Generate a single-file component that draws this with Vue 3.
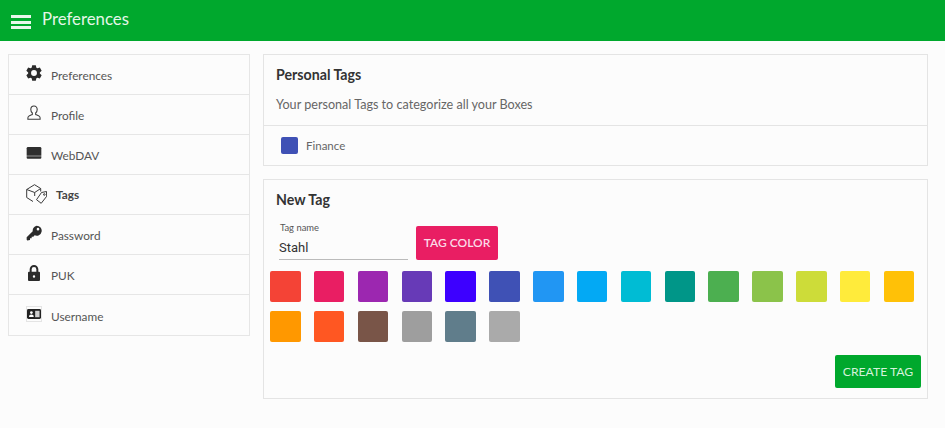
<script setup>
const nav = [
  { label: 'Preferences', icon: 'gear' },
  { label: 'Profile', icon: 'user' },
  { label: 'WebDAV', icon: 'drive' },
  { label: 'Tags', icon: 'tags', active: true },
  { label: 'Password', icon: 'key' },
  { label: 'PUK', icon: 'lock' },
  { label: 'Username', icon: 'card' }
]
const colors = ['#f44336','#e91e63','#9c27b0','#673ab7','#3d00ff','#3f51b5','#2196f3','#03a9f4','#00bcd4','#009688','#4caf50','#8bc34a','#cddc39','#ffeb3b','#ffc107','#ff9800','#ff5722','#795548','#9e9e9e','#607d8b','#aaaaaa']

const pt = (deg, r) => {
  const a = (deg * Math.PI) / 180
  return `${(12 + r * Math.cos(a)).toFixed(2)} ${(12 - r * Math.sin(a)).toFixed(2)}`
}
const gearPoints = []
for (let k = 0; k < 6; k++) {
  const a = 90 + k * 60
  gearPoints.push(pt(a - 24, 8.8), pt(a - 13, 12), pt(a + 13, 12), pt(a + 24, 8.8))
}
const gearPath = `M${gearPoints.join('L')}Z M12 7.6a4.400 4.400 0 1 0 0 8.800 4.400 4.400 0 0 0 0-8.800z`
</script>

<template>
  <div class="page">
    <header class="bar">
      <span class="burger"><i></i><i></i><i></i></span>
      <span class="bar-title">Preferences</span>
    </header>
    <div class="content">
      <nav class="side">
        <a v-for="n in nav" :key="n.label" class="row" :class="{ active: n.active }">
          <span class="ico-box" :class="n.icon">
            <svg v-if="n.icon === 'tags'" viewBox="0 0 21 20" fill="none" stroke="#3a3a3a" stroke-width="1" stroke-linejoin="round">
              <path d="M.7 5.500L8.500.7l6.200 3.800-6 4zM.7 5.500v8l6.300 4M8.700 8.500v3.500M14.700 4.500v3" />
              <path d="M15.500 8.500l5-1 .2 4.800-5.500 7-4.700-3.600z" />
              <circle cx="18.300" cy="10.500" r=".8" />
            </svg>
            <svg v-else viewBox="0 0 24 24">
              <path v-if="n.icon === 'gear'" fill="#2b2b2b" fill-rule="evenodd" :d="gearPath" />
              <g v-else-if="n.icon === 'user'" fill="none" stroke="#3a3a3a" stroke-width="1.600">
                <path d="M12 1.500c-3 0-4.800 2.200-4.800 5.200 0 2.200.9 4.100 2.300 5.300v2.200c-2.400 1-5.500 2-6.300 3.600-.4.9-.4 2.400-.4 3.700h18.400c0-1.300 0-2.800-.4-3.700-.8-1.600-3.900-2.600-6.300-3.600V12c1.400-1.200 2.300-3.100 2.300-5.300 0-3-1.800-5.200-4.800-5.200z" />
              </g>
              <g v-else-if="n.icon === 'drive'">
                <path fill="#2f2f2f" d="M3 3h18a2 2 0 0 1 2 2v11H1V5a2 2 0 0 1 2-2z" />
                <path fill="#2f2f2f" d="M1 17h22v2a1.500 1.500 0 0 1-1.500 1.500h-19A1.500 1.500 0 0 1 1 19z" />
              </g>
              <g v-else-if="n.icon === 'key'" fill="#2b2b2b">
                <path fill-rule="evenodd" d="M16 1a7.500 7.500 0 1 1-3.100 14.300L11 17.500H8.500V20H6v2.500L2 23.300 1 22v-3.500l9.100-9.100A7.500 7.500 0 0 1 16 1zm2 3.200a2 2 0 1 0 0 4 2 2 0 0 0 0-4z" />
              </g>
              <g v-else-if="n.icon === 'lock'">
                <path fill="#2b2b2b" fill-rule="evenodd" d="M12 0a6.500 6.500 0 0 1 6.500 6.500V10h1a1.500 1.500 0 0 1 1.500 1.500v11a1.500 1.500 0 0 1-1.500 1.500h-15A1.500 1.500 0 0 1 3 22.500v-11A1.500 1.500 0 0 1 4.500 10h1V6.500A6.500 6.500 0 0 1 12 0zm0 3a3.500 3.500 0 0 0-3.500 3.500V10h7V6.500A3.500 3.500 0 0 0 12 3zm0 12.500a1.800 1.800 0 1 0 0 3.600 1.800 1.800 0 0 0 0-3.600z" />
              </g>
              <g v-else>
                <rect x="0" y="3.500" width="24" height="17" rx="2.500" fill="#222" />
                <circle cx="7.500" cy="9.500" r="2.300" fill="#fff" />
                <path d="M3.500 17c0-2.700 1.500-4 4-4s4 1.300 4 4z" fill="#fff" />
                <rect x="14" y="6.500" width="7.500" height="11" fill="#cfcfcf" />
              </g>
            </svg>
          </span>
          <span class="label">{{ n.label }}</span>
        </a>
      </nav>

      <main class="main">
        <section class="card">
          <div class="card-top">
            <h2>Personal Tags</h2>
            <p>Your personal Tags to categorize all your Boxes</p>
          </div>
          <div class="tag-row">
            <span class="dot"></span>
            <span>Finance</span>
          </div>
        </section>

        <section class="card new">
          <h2>New Tag</h2>
          <div class="form-row">
            <label class="field">
              <span class="field-label">Tag name</span>
              <span class="field-value">Stahl</span>
            </label>
            <button class="btn pink">TAG COLOR</button>
          </div>
          <div class="swatches">
            <span v-for="c in colors" :key="c" class="sw" :style="{ background: c }"></span>
          </div>
          <div class="actions">
            <button class="btn green">CREATE TAG</button>
          </div>
        </section>
      </main>
    </div>
  </div>
</template>

<style>
html, body { margin: 0; background: #fcfcfc; }
</style>

<style scoped>
.page {
  width: 945px;
  height: 428px;
  overflow: hidden;
  background: #fcfcfc;
  font-family: Lato, "Liberation Sans", sans-serif;
  color: #555;
}
.bar {
  height: 41px;
  background: #00a82d;
  display: flex;
  align-items: center;
  padding-left: 11px;
  color: #e4f6e8;
  box-sizing: border-box;
}
.burger {
  width: 20px;
  height: 14px;
  display: flex;
  flex-direction: column;
  justify-content: space-between;
  margin-top: 3px;
}
.burger i { display: block; height: 3px; background: #e8f7eb; }
.bar-title { margin-left: 11px; font-size: 16.800px; line-height: 20px; margin-top: -3px; }
.content {
  display: flex;
  align-items: flex-start;
  padding: 13px 17px 0 8px;
  gap: 13px;
}
.side {
  width: 242px;
  flex: none;
  box-sizing: border-box;
  border: 1px solid #e6e6e6;
  display: flex;
  flex-direction: column;
  height: 281.500px;
}
.row {
  flex: 1;
  display: flex;
  align-items: center;
  padding-left: 17px;
  font-size: 11.800px;
  color: #555;
  border-bottom: 1px solid #e6e6e6;
}
.row:last-child { border-bottom: 0; }
.ico-box { width: 16px; height: 16px; flex: none; display: flex; margin-top: -3px; }
.ico-box svg { width: 100%; height: 100%; display: block; }
.ico-box.tags { width: 21px; height: 20px; margin-top: -1px; }
.label { margin-left: 9px; margin-top: 2px; }
.row.active .label { font-weight: 700; color: #444; margin-top: 0; }
.main {
  flex: 1;
  display: flex;
  flex-direction: column;
  gap: 13px;
}
.card {
  border: 1px solid #e4e4e4;
  box-sizing: border-box;
}
.card h2 {
  margin: 0;
  font-size: 14.200px;
  font-weight: 700;
  color: #333;
  line-height: 18px;
}
.card-top { padding: 11px 12px 0; height: 71px; box-sizing: border-box; border-bottom: 1px solid #e4e4e4; }
.card-top p { margin: 13px 0 0; font-size: 12.600px; line-height: 16px; color: #666; }
.tag-row {
  height: 39px;
  display: flex;
  align-items: center;
  padding-left: 17px;
  font-size: 11.500px;
  color: #666;
  gap: 8px;
}
.dot { width: 17px; height: 17px; border-radius: 2px; background: #3f51b5; }
.new { height: 220px; padding: 11px 6px 0; }
.new h2 { padding-left: 6px; }
.form-row { display: flex; align-items: flex-end; margin-top: 13px; padding-left: 9px; }
.field { width: 129px; border-bottom: 1px solid #bbb; display: flex; flex-direction: column; height: 38px; box-sizing: border-box; }
.field-label { font-size: 9.400px; line-height: 12px; color: #555; padding-left: 1px; }
.field-value { font-family: Roboto, "Liberation Sans", sans-serif; font-size: 13px; line-height: 20px; color: #333; margin-top: 4px; }
.btn {
  border: 0;
  border-radius: 2px;
  font-family: Lato, "Liberation Sans", sans-serif;
  padding: 0;
}
.pink { width: 82px; height: 34.500px; margin-left: 8px; background: #e91e63; color: #fbdbe7; font-size: 12px; font-weight: 600; }
.swatches {
  display: grid;
  grid-template-columns: repeat(15, 30.500px);
  column-gap: 13.350px;
  row-gap: 9.500px;
  margin-top: 11px;
}
.sw { height: 30.500px; border-radius: 2px; }
.actions { display: flex; justify-content: flex-end; margin-top: 13.500px; }
.green { width: 86px; height: 33px; background: #00a82d; color: #d5f2dc; font-size: 12.200px; }
</style>
